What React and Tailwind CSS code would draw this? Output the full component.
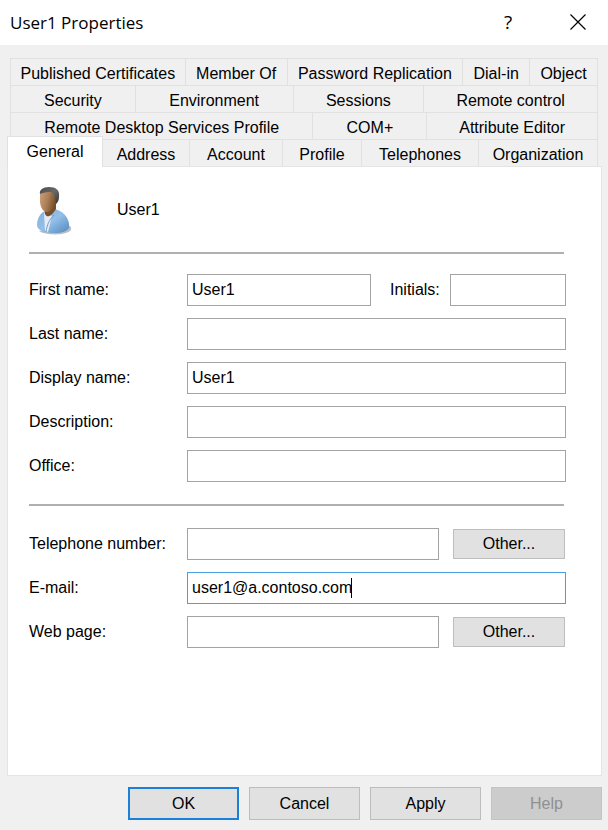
import { useState } from "react";

const tabRows = [
  {
    cols: "grid-cols-[175fr_102fr_176fr_67fr_68fr]",
    tabs: ["Published Certificates", "Member Of", "Password Replication", "Dial-in", "Object"],
  },
  {
    cols: "grid-cols-[125fr_158fr_131fr_174fr]",
    tabs: ["Security", "Environment", "Sessions", "Remote control"],
  },
  {
    cols: "grid-cols-[303fr_114fr_171fr]",
    tabs: ["Remote Desktop Services Profile", "COM+", "Attribute Editor"],
  },
];

const frontTabs = ["Address", "Account", "Profile", "Telephones", "Organization"];

function Tab({ children }) {
  return (
    <button
      type="button"
      role="tab"
      aria-selected="false"
      className="h-[27px] min-w-0 border-t border-r border-[#e1e1e1] pt-[3px] text-center whitespace-nowrap"
    >
      {children}
    </button>
  );
}

function TextField({ id, border = "border-[#a3a3a3]", className = "", ...props }) {
  return (
    <input
      id={id}
      type="text"
      spellCheck="false"
      className={`h-8 min-w-0 border bg-white px-1 outline-none ${border} ${className}`}
      {...props}
    />
  );
}

function Row({ id, label, children }) {
  return (
    <div className="flex items-center">
      <label htmlFor={id} className="w-[158px] shrink-0">
        {label}
      </label>
      {children}
    </div>
  );
}

function OtherButton({ label }) {
  return (
    <button
      type="button"
      aria-label={label}
      className="mr-px ml-3.5 h-[30px] w-28 shrink-0 border border-[#bdbdbd] bg-[#e1e1e1]"
    >
      Other...
    </button>
  );
}

function UserIcon() {
  return (
    <svg width="38" height="50" viewBox="0 0 38 50" aria-hidden="true">
      <defs>
        <linearGradient id="shirt" x1="0" y1="0" x2="1" y2="1">
          <stop offset="0" stopColor="#86b0d8" />
          <stop offset="0.5" stopColor="#93bfe8" />
          <stop offset="1" stopColor="#5287bd" />
        </linearGradient>
        <linearGradient id="face" x1="0" y1="0.3" x2="1" y2="0.6">
          <stop offset="0" stopColor="#c99b74" />
          <stop offset="0.45" stopColor="#ab7e56" />
          <stop offset="1" stopColor="#68431f" />
        </linearGradient>
        <linearGradient id="hair" x1="0" y1="0" x2="1" y2="1">
          <stop offset="0" stopColor="#4a4a4a" />
          <stop offset="0.5" stopColor="#68696a" />
          <stop offset="1" stopColor="#333333" />
        </linearGradient>
      </defs>
      <path d="M3 46 C8 50 28 51 34 46 C35 45 36 43 34 41Z" fill="#b9bcc0" />
      <path d="M9 26 C4 28 1 34 1 40 C1 46 10 48 19 48 C26 48 31 46 33 43 C34 36 30 27 19 24Z" fill="url(#shirt)" />
      <path d="M8 28 L9 46 L12 47 L16 31Z" fill="#e6eaf5" />
      <path d="M9 22 L9 29 C11 33 15 32 20 24 L20 16Z" fill="#75502c" />
      <path d="M4 6 L4 16 C4 22 7 27 11 27 C15 27 19 22 21 16 L21 6Z" fill="url(#face)" />
      <path d="M4 9 C3 5 7 2 13 2 C20 2 24 5 23 12 C23 15 22 17 20 19 L19 12 C18 8 16 7 13 7 C9 7 7 8 4 9Z" fill="url(#hair)" />
      <path d="M10 47 C11 40 13 35 18 30" fill="none" stroke="#6d9fd0" strokeWidth="1" />
    </svg>
  );
}

export default function App() {
  const [email, setEmail] = useState("user1@a.contoso.com");

  return (
    <div className="flex min-h-screen flex-col bg-[#f0f0f0] font-['Liberation_Sans',Arial,sans-serif] text-[16px] leading-5 text-black">
      <header className="flex h-[45px] items-center bg-white pr-[22px] pl-2.5">
        <h1 className="flex-1 font-['Open_Sans','Noto_Sans',sans-serif] text-[17px] leading-6">User1 Properties</h1>
        <button
          type="button"
          aria-label="Help"
          className="mr-14 flex h-6 w-3 items-center justify-center pb-0.5 font-['Open_Sans','Noto_Sans',sans-serif] text-[19px] leading-6"
        >
          ?
        </button>
        <button type="button" aria-label="Close" className="flex h-6 w-4 items-center justify-center pb-0.5">
          <svg width="16" height="16" viewBox="0 0 16 16" aria-hidden="true">
            <path d="M0.500 0.500 L15.500 15.500 M15.500 0.500 L0.500 15.500" stroke="#000" strokeWidth="1.2" />
          </svg>
        </button>
      </header>

      <main className="flex flex-1 flex-col pt-[13px] pr-1.5 pl-[7px]">
        <div role="tablist" aria-label="User property pages">
          {tabRows.map((row) => (
            <div key={row.tabs[0]} className={`mr-1 ml-[3px] grid border-l border-[#e1e1e1] ${row.cols}`}>
              {row.tabs.map((tab) => (
                <Tab key={tab}>{tab}</Tab>
              ))}
            </div>
          ))}
          <div className="mr-1 grid grid-cols-[96fr_87fr_93fr_79fr_117fr_119fr]">
            <button
              type="button"
              role="tab"
              aria-selected="true"
              className="z-10 -mt-[3px] -mb-px h-[31px] border-x border-t border-[#e1e1e1] bg-white"
            >
              General
            </button>
            {frontTabs.map((tab) => (
              <Tab key={tab}>{tab}</Tab>
            ))}
          </div>
        </div>

        <form className="flex flex-1 flex-col border border-[#e4e4e4] bg-white pr-[35px] pl-[21px]">
          <div className="flex h-[85px] items-center pl-[7px]">
            <UserIcon />
            <span className="pl-[43px]">User1</span>
          </div>
          <hr className="mr-0.5 border-t-2 border-[#b0b0b0]" />

          <div className="flex flex-col gap-3 pt-5 pb-[22px]">
            <Row id="first" label="First name:">
              <TextField id="first" defaultValue="User1" className="flex-1" />
              <label htmlFor="initials" className="w-[79px] pl-[19px]">
                Initials:
              </label>
              <TextField id="initials" className="w-[116px]" />
            </Row>
            <Row id="last" label="Last name:">
              <TextField id="last" className="flex-1" />
            </Row>
            <Row id="display" label="Display name:">
              <TextField id="display" defaultValue="User1" className="flex-1" />
            </Row>
            <Row id="description" label="Description:">
              <TextField id="description" className="flex-1" />
            </Row>
            <Row id="office" label="Office:">
              <TextField id="office" className="flex-1" />
            </Row>
          </div>
          <hr className="mr-0.5 border-t-2 border-[#b0b0b0]" />

          <div className="flex flex-col gap-3 pt-[22px]">
            <Row id="phone" label="Telephone number:">
              <TextField id="phone" className="flex-1" />
              <OtherButton label="Other telephone numbers" />
            </Row>
            <Row id="email" label="E-mail:">
              <div className="relative flex flex-1">
                <TextField
                  id="email"
                  border="border-[#4a9fe3]"
                  value={email}
                  onChange={(event) => setEmail(event.target.value)}
                  className="flex-1"
                />
                <span className="pointer-events-none absolute top-1.5 left-[164px] h-5 w-px bg-black" />
              </div>
            </Row>
            <Row id="web" label="Web page:">
              <TextField id="web" className="flex-1" />
              <OtherButton label="Other web pages" />
            </Row>
          </div>
        </form>

        <footer className="flex justify-end gap-2.5 pt-[11px] pb-2.5">
          <button type="button" className="h-[33px] w-[111px] border-2 border-[#1c80d8] bg-[#e1e1e1]">
            OK
          </button>
          <button type="button" className="h-[33px] w-[111px] border border-[#bdbdbd] bg-[#e1e1e1]">
            Cancel
          </button>
          <button type="button" className="h-[33px] w-[111px] border border-[#bdbdbd] bg-[#e1e1e1]">
            Apply
          </button>
          <button type="button" disabled className="h-[33px] w-[111px] border border-[#c4c4c4] bg-[#cccccc] text-[#909090]">
            Help
          </button>
        </footer>
      </main>
    </div>
  );
}
